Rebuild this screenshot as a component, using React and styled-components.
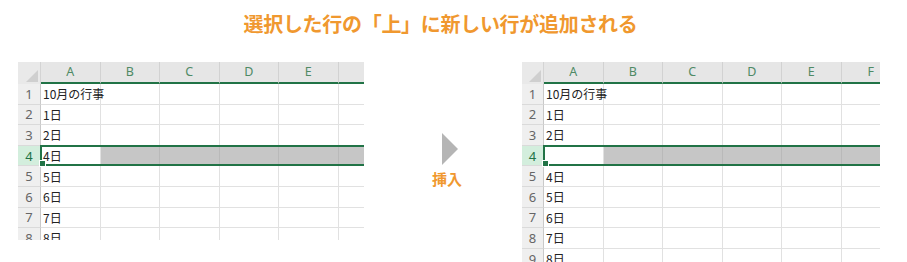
import React from "react";
import styled, { createGlobalStyle } from "styled-components";

const Global = createGlobalStyle`
  html, body { margin: 0; padding: 0; background: #ffffff; }
  body { width: 907px; height: 262px; overflow: hidden; font-family: "Noto Sans CJK JP", "Noto Sans", sans-serif; }
`;

const ORANGE = "#f0982f";
const GREEN = "#217346";
const COL_W = 59.5;

const Page = styled.div`
  width: 907px;
  height: 262px;
  display: flex;
  flex-direction: column;
`;

const Title = styled.h1`
  margin: 0;
  padding: 11px 26px 0 0;
  height: 51px;
  box-sizing: border-box;
  text-align: center;
  font-size: 20px;
  line-height: 26px;
  font-weight: 700;
  color: ${ORANGE};
  letter-spacing: -0.3px;
`;

const Stage = styled.div`
  display: flex;
  align-items: flex-start;
  padding-left: 18px;
  margin-top: 11px;
`;

const Sheet = styled.div`
  width: ${(p) => p.$w}px;
  height: ${(p) => p.$h}px;
  overflow: hidden;
  display: flex;
  flex-direction: column;
  flex: none;
  font-family: "Noto Sans CJK JP", "Noto Sans", sans-serif;
`;

const Row = styled.div`
  display: flex;
  flex: none;
  height: ${(p) => p.$h}px;
  position: relative;
`;

const Corner = styled.div`
  width: ${(p) => p.$w}px;
  flex: none;
  box-sizing: border-box;
  background: #e9e9e9;
  border-right: 1px solid #d4d4d4;
  display: flex;
  align-items: flex-end;
  justify-content: flex-end;
  padding: 0 2px 2px 0;
`;

const ColHead = styled.div`
  width: ${COL_W}px;
  flex: none;
  box-sizing: border-box;
  background: #e6e6e6;
  border-right: 1px solid #d2d2d2;
  border-bottom: 2px solid ${GREEN};
  color: #4f8a65;
  font-family: "Noto Sans", "Noto Sans CJK JP", sans-serif;
  font-size: 12.5px;
  display: flex;
  align-items: center;
  justify-content: center;
  padding-bottom: 1px;
`;

const RowHead = styled.div`
  width: ${(p) => p.$w}px;
  flex: none;
  box-sizing: border-box;
  background: ${(p) => (p.$sel ? "#d3eedd" : "#efefef")};
  color: ${(p) => (p.$sel ? GREEN : "#666666")};
  border-right: 1px solid ${(p) => (p.$sel ? GREEN : "#c9c9c9")};
  border-bottom: 1px solid #dadada;
  font-family: "Noto Sans", "Noto Sans CJK JP", sans-serif;
  font-size: 13px;
  display: flex;
  align-items: center;
  justify-content: center;
`;

const Cell = styled.div`
  width: ${COL_W}px;
  flex: none;
  box-sizing: border-box;
  background: ${(p) => (p.$shade ? "#c6c6c6" : "#ffffff")};
  border-right: 1px solid ${(p) => (p.$shade ? "#b9b9b9" : "#e1e1e1")};
  border-bottom: 1px solid #e1e1e1;
  font-size: 12px;
  color: #222222;
  white-space: nowrap;
  overflow: visible;
  padding-left: 2px;
  display: flex;
  align-items: center;
  position: relative;
  z-index: ${(p) => (p.$over ? 1 : 0)};
`;

const SelectionBox = styled.div`
  position: absolute;
  left: ${(p) => p.$left - 1}px;
  right: 0;
  top: -1px;
  bottom: 0;
  border: 2px solid ${GREEN};
  border-right: none;
  z-index: 2;
  pointer-events: none;
`;

const FillHandle = styled.div`
  position: absolute;
  left: -3px;
  bottom: -3px;
  width: 5px;
  height: 5px;
  background: ${GREEN};
  border: 1px solid #ffffff;
  box-sizing: content-box;
`;

const Middle = styled.div`
  width: 158px;
  flex: none;
  display: flex;
  flex-direction: column;
  align-items: center;
  padding-top: 71px;
`;

const Arrow = styled.svg`
  display: block;
  margin-left: 14px;
`;

const Label = styled.div`
  margin-top: 5px;
  margin-left: 8px;
  color: ${ORANGE};
  font-size: 15px;
  font-weight: 700;
  line-height: 18px;
`;

function Spreadsheet({ width, height, headW, cols, rows, rowH }) {
  return (
    <Sheet $w={width} $h={height}>
      <Row $h={22}>
        <Corner $w={headW}>
          <svg width="12" height="12" viewBox="0 0 12 12">
            <polygon points="12,0 12,12 0,12" fill="#cfcfcf" />
          </svg>
        </Corner>
        {cols.map((c, j) => (
          <ColHead key={j}>{c}</ColHead>
        ))}
      </Row>
      {rows.map((r, i) => (
        <Row key={i} $h={rowH}>
          <RowHead $w={headW} $sel={r.sel}>
            {i + 1}
          </RowHead>
          {cols.map((c, j) => (
            <Cell key={j} $shade={r.sel && j > 0} $over={j === 0}>
              {j === 0 ? r.text : ""}
            </Cell>
          ))}
          {r.sel && (
            <SelectionBox $left={headW}>
              <FillHandle />
            </SelectionBox>
          )}
        </Row>
      ))}
    </Sheet>
  );
}

const leftRows = [
  { text: "10月の行事" },
  { text: "1日" },
  { text: "2日" },
  { text: "4日", sel: true },
  { text: "5日" },
  { text: "6日" },
  { text: "7日" },
  { text: "8日" },
];

const rightRows = [
  { text: "10月の行事" },
  { text: "1日" },
  { text: "2日" },
  { text: "", sel: true },
  { text: "4日" },
  { text: "5日" },
  { text: "6日" },
  { text: "7日" },
  { text: "8日" },
];

export default function App() {
  return (
    <>
      <Global />
      <Page>
        <Title>選択した行の「上」に新しい行が追加される</Title>
        <Stage>
          <Spreadsheet
            width={346}
            height={178}
            headW={23}
            cols={["A", "B", "C", "D", "E", ""]}
            rows={leftRows}
            rowH={20.6}
          />
          <Middle>
            <Arrow width="16" height="32" viewBox="0 0 16 32">
              <polygon points="0,0 16,16 0,32" fill="#b5b5b5" />
            </Arrow>
            <Label>挿入</Label>
          </Middle>
          <Spreadsheet
            width={358}
            height={200}
            headW={22}
            cols={["A", "B", "C", "D", "E", "F"]}
            rows={rightRows}
            rowH={20.6}
          />
        </Stage>
      </Page>
    </>
  );
}
